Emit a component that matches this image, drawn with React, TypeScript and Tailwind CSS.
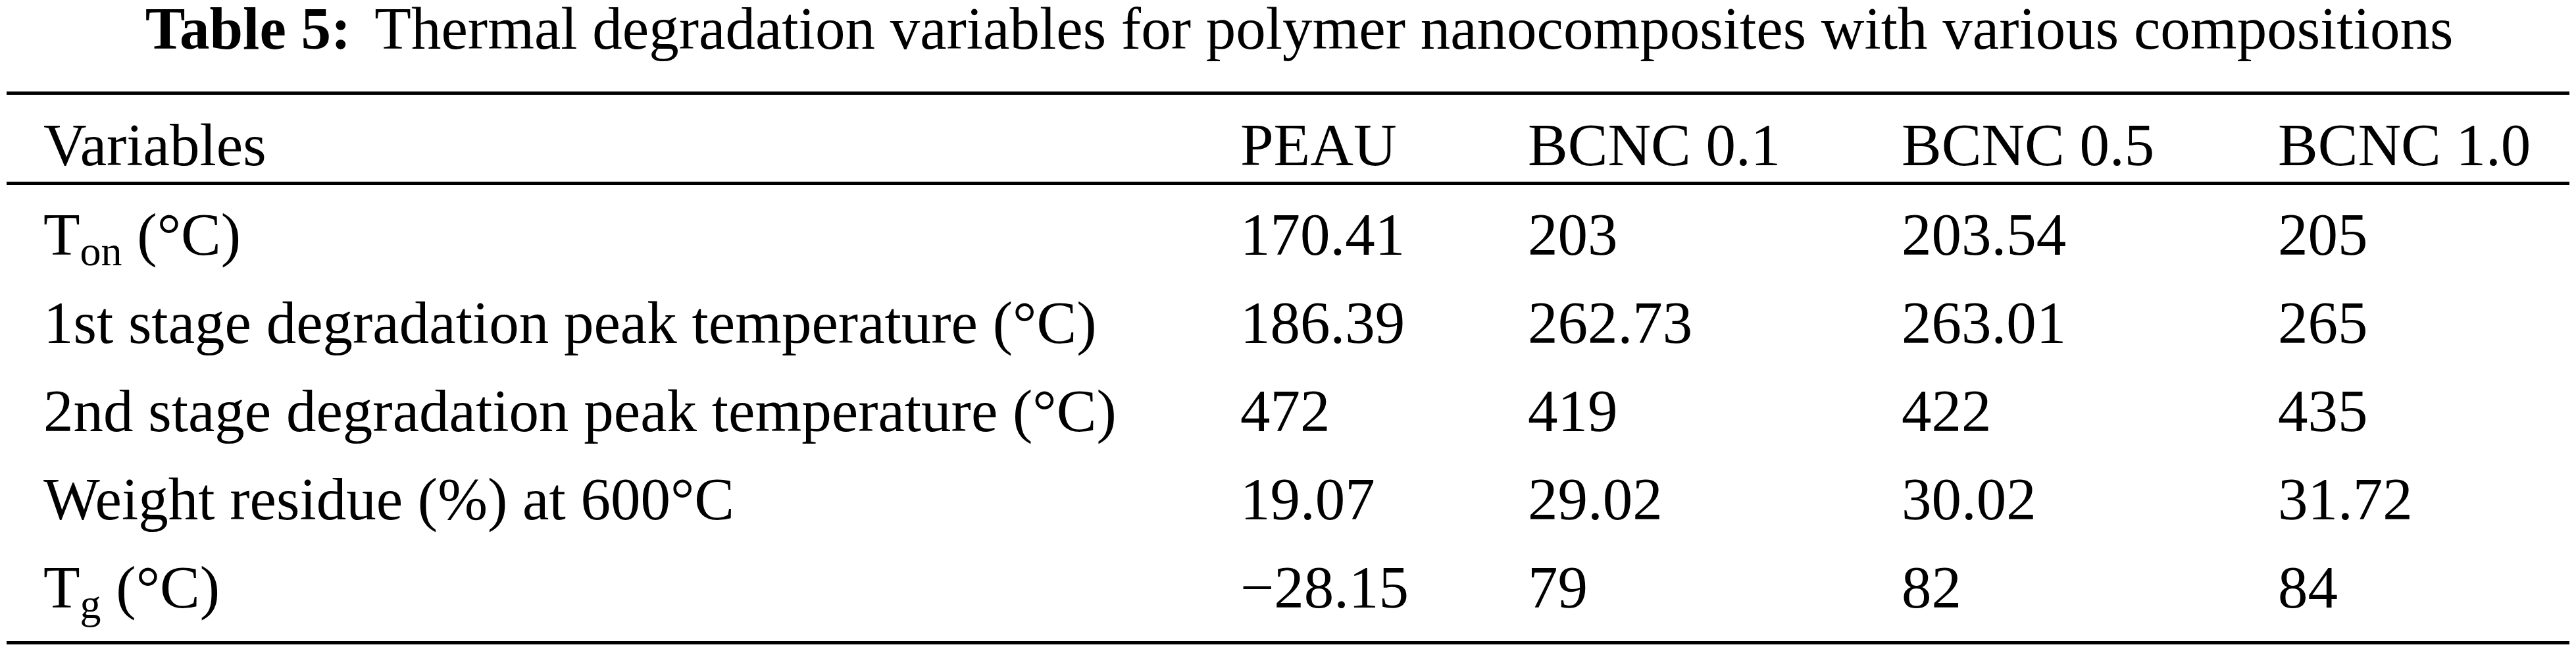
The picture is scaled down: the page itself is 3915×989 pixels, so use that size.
import React from 'react';

type Row = {
  label: React.ReactNode;
  values: string[];
};

const rows: Row[] = [
  {
    label: (
      <>
        T<sub className="text-[64px]">on</sub> (°C)
      </>
    ),
    values: ['170.41', '203', '203.54', '205'],
  },
  {
    label: '1st stage degradation peak temperature (°C)',
    values: ['186.39', '262.73', '263.01', '265'],
  },
  {
    label: '2nd stage degradation peak temperature (°C)',
    values: ['472', '419', '422', '435'],
  },
  {
    label: 'Weight residue (%) at 600°C',
    values: ['19.07', '29.02', '30.02', '31.72'],
  },
  {
    label: (
      <>
        T<sub className="text-[64px]">g</sub> (°C)
      </>
    ),
    values: ['−28.15', '79', '82', '84'],
  },
];

const headers = ['PEAU', 'BCNC 0.1', 'BCNC 0.5', 'BCNC 1.0'];

const gridCols = 'grid grid-cols-[1875px_437px_568px_572px_1fr]';

export default function App() {
  return (
    <div className="w-[3915px] h-[989px] bg-white text-black font-['Liberation_Serif','Times_New_Roman',serif]">
      <h1 className="pt-[2px] pl-[34px] text-center text-[91px] leading-[84px] whitespace-nowrap">
        <span className="font-bold mr-[36px]">Table 5:</span>
        Thermal degradation variables for polymer nanocomposites with various compositions
      </h1>

      <div className="ml-[10px] mt-[53px] w-[3895px] text-[91px]">
        {/* header */}
        <div className={`${gridCols} border-y-[5px] border-black pt-[27px] pb-[5px] leading-[100px]`}>
          <div className="pl-[56px]">Variables</div>
          {headers.map((h) => (
            <div key={h} className="whitespace-nowrap">
              {h}
            </div>
          ))}
        </div>

        {/* body */}
        <div className="border-b-[5px] border-black pt-[9px] pb-[14px]">
          {rows.map((row, i) => (
            <div key={i} className={`${gridCols} leading-[134px]`}>
              <div className="pl-[56px] whitespace-nowrap">{row.label}</div>
              {row.values.map((v, j) => (
                <div key={j}>{v}</div>
              ))}
            </div>
          ))}
        </div>
      </div>
    </div>
  );
}
